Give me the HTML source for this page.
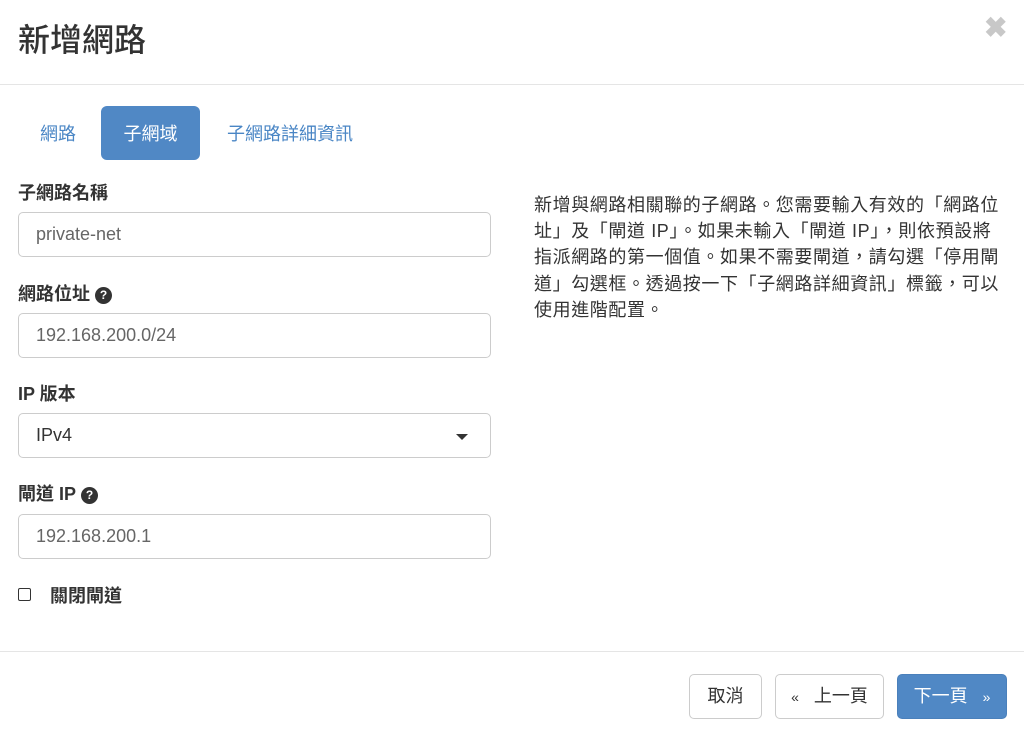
<!DOCTYPE html>
<html><head><meta charset="utf-8"><style>
*{box-sizing:border-box;margin:0;padding:0}
body{width:1024px;height:731px;background:#fff;position:relative;overflow:hidden;font-family:"Liberation Sans","Noto Sans CJK TC",sans-serif;color:#333}
.a{position:absolute}
.title{left:18px;top:19px;font-size:32px;line-height:42px;font-weight:500;color:#333}
.close{left:984px;top:12px;font-size:28px;font-weight:bold;color:#c8c8c8;line-height:32px}
.hr{left:0;width:1024px;height:1px;background:#e5e5e5}
.tab{top:106px;height:54px;line-height:56px;font-size:18px;color:#4a86c5;text-align:center}
.tab.act{background:#5088c5;color:#fff;border-radius:6px}
.lbl{left:18px;font-size:18px;font-weight:bold;line-height:22px;color:#333}
.inp{left:18px;width:473px;height:45px;border:1px solid #ccc;border-radius:5px;padding-left:17px;line-height:43px;font-size:18px;color:#666}
.q{display:inline-block;width:17px;height:17px;border-radius:50%;background:#333;color:#fff;font-size:12px;line-height:17px;text-align:center;vertical-align:1px;margin-left:5px;font-weight:bold}
.desc{left:534px;top:192px;font-size:18px;letter-spacing:0.6px;line-height:26.2px;color:#333;width:490px;white-space:nowrap}
.btn{top:674px;height:45px;border:1px solid #ccc;border-radius:5px;font-size:18px;line-height:43px;text-align:center;color:#333;background:#fff}
.sm{font-size:14px}
</style></head><body>
<div class="a title">新增網路</div>
<div class="a close">✖</div>
<div class="a hr" style="top:84px"></div>
<div class="a tab" style="left:18px;width:80px">網路</div>
<div class="a tab act" style="left:101px;width:99px">子網域</div>
<div class="a tab" style="left:215px;width:150px">子網路詳細資訊</div>

<div class="a lbl" style="top:182px">子網路名稱</div>
<div class="a inp" style="top:212px">private-net</div>
<div class="a lbl" style="top:283px">網路位址<span class="q">?</span></div>
<div class="a inp" style="top:313px">192.168.200.0/24</div>
<div class="a lbl" style="top:383px">IP 版本</div>
<div class="a inp" style="top:413px;color:#333">IPv4<span style="position:absolute;right:22px;top:20px;width:0;height:0;border-left:6px solid transparent;border-right:6px solid transparent;border-top:6px solid #333"></span></div>
<div class="a lbl" style="top:483px">閘道 IP<span class="q">?</span></div>
<div class="a inp" style="top:514px">192.168.200.1</div>
<div class="a" style="left:18px;top:588px;width:13px;height:13px;border:1.5px solid #333;border-radius:2px"></div>
<div class="a lbl" style="left:50px;top:585px">關閉閘道</div>

<div class="a desc">新增與網路相關聯的子網路。您需要輸入有效的「網路位<br>址」及「閘道 IP」。如果未輸入「閘道 IP」，則依預設將<br>指派網路的第一個值。如果不需要閘道，請勾選「停用閘<br>道」勾選框。透過按一下「子網路詳細資訊」標籤，可以<br>使用進階配置。</div>

<div class="a hr" style="top:651px"></div>
<div class="a btn" style="left:689px;width:73px">取消</div>
<div class="a btn" style="left:775px;width:109px"><span class="sm">«</span>&nbsp;&nbsp; 上一頁</div>
<div class="a btn" style="left:897px;width:110px;background:#5088c5;border-color:#4a80bb;color:#fff">下一頁&nbsp;&nbsp; <span class="sm">»</span></div>
</body></html>
